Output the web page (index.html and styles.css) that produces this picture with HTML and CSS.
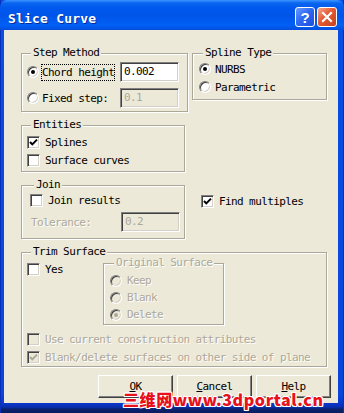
FILE: index.html
```html
<!DOCTYPE html>
<html>
<head>
<meta charset="utf-8">
<title>Slice Curve</title>
<link rel="stylesheet" href="styles.css">
</head>
<body>
<div class="window">
  <div class="titlebar">
    <span class="title">Slice Curve</span>
    <div class="tbtns">
      <span class="tbtn help">?</span>
      <span class="tbtn close"><svg width="12" height="12" viewBox="0 0 12 12"><path d="M2 2 L10 10 M10 2 L2 10" stroke="#fff" stroke-width="2.2" stroke-linecap="square"/></svg></span>
    </div>
  </div>
  <div class="client">
    <div class="row1">
      <div class="group step">
        <div class="legend">Step Method</div>
        <div class="srow first">
          <span class="opt"><span class="radio on"></span><span class="lbl focus">Chord height</span></span>
          <span class="edit">0.002</span>
        </div>
        <div class="srow gap6">
          <span class="opt"><span class="radio"></span><span class="lbl">Fixed step:</span></span>
          <span class="edit dis">0.1</span>
        </div>
      </div>
      <div class="group spline">
        <div class="legend">Spline Type</div>
        <div class="crow first1"><span class="radio on"></span><span class="lbl">NURBS</span></div>
        <div class="crow"><span class="radio"></span><span class="lbl">Parametric</span></div>
      </div>
    </div>

    <div class="group entities">
      <div class="legend">Entities</div>
      <div class="crow first2"><span class="check on"><svg width="9" height="9" viewBox="0 0 9 9"><polyline points="1,4 3.3,6.4 8,1.6" fill="none" stroke="#000" stroke-width="2"/></svg></span><span class="lbl">Splines</span></div>
      <div class="crow"><span class="check"></span><span class="lbl">Surface curves</span></div>
    </div>

    <div class="row3">
      <div class="group join">
        <div class="legend">Join</div>
        <div class="crow"><span class="check"></span><span class="lbl">Join results</span></div>
        <div class="srow gap3">
          <span class="lbl dtext tol">Tolerance:</span>
          <span class="edit dis">0.2</span>
        </div>
      </div>
      <div class="crow find"><span class="check on"><svg width="9" height="9" viewBox="0 0 9 9"><polyline points="1,4 3.3,6.4 8,1.6" fill="none" stroke="#000" stroke-width="2"/></svg></span><span class="lbl">Find multiples</span></div>
    </div>

    <div class="group trim">
      <div class="legend">Trim Surface</div>
      <div class="trimtop">
        <div class="crow yes"><span class="check"></span><span class="lbl">Yes</span></div>
        <div class="group orig">
          <div class="legend dtext">Original Surface</div>
          <div class="orow first3"><span class="radio dis"></span><span class="lbl dtext">Keep</span></div>
          <div class="orow"><span class="radio dis"></span><span class="lbl dtext">Blank</span></div>
          <div class="orow"><span class="radio dis on"></span><span class="lbl dtext">Delete</span></div>
        </div>
      </div>
      <div class="crow first4"><span class="check dis"></span><span class="lbl dtext">Use current construction attributes</span></div>
      <div class="crow"><span class="check dis on"><svg width="9" height="9" viewBox="0 0 9 9"><polyline points="1,4 3.3,6.4 8,1.6" fill="none" stroke="#aca899" stroke-width="2"/></svg></span><span class="lbl dtext">Blank/delete surfaces on other side of plane</span></div>
    </div>

    <div class="buttons">
      <span class="btn"><u>O</u>K</span>
      <span class="btn"><u>C</u>ancel</span>
      <span class="btn"><u>H</u>elp</span>
    </div>
  </div>
  <div class="watermark">三维网www.3dportal.cn</div>
</div>
</body>
</html>
```
FILE: styles.css
```css
* { box-sizing: border-box; }
html, body { margin: 0; padding: 0; }
body {
  width: 344px;
  height: 413px;
  overflow: hidden;
  background: #0a1d5e;
  font-family: "DejaVu Sans Mono", "Liberation Mono", monospace;
  font-size: 11px;
  letter-spacing: -0.6px;
  color: #000;
}
.window {
  position: relative;
  width: 344px;
  height: 413px;
  display: flex;
  flex-direction: column;
  background: linear-gradient(to bottom, #0a4ee4 0, #0846dc 395px, #0838cc 403px, #0a2fb0 407px, #0b2270 409px, #0a1d5e 413px);
  box-shadow: inset 1px 0 0 #0a2fb8, inset -1px 0 0 #0a2fb8;
}
.titlebar {
  height: 30px;
  flex: none;
  display: flex;
  align-items: flex-start;
  padding: 0 7px 0 8px;
  border-radius: 7px 7px 0 0;
  background: linear-gradient(to bottom, #3d95ff 0, #0a66f0 3px, #0058ee 8px, #0055e8 16px, #0060f6 25px, #0056e6 28px, #0a4cdc 30px);
}
.title {
  margin-top: 11px;
  font-weight: bold;
  font-size: 13px;
  letter-spacing: 0.2px;
  line-height: 16px;
  color: #fff;
  text-shadow: 1px 1px 0 #0a2a9c;
}
.tbtns {
  margin-left: auto;
  margin-top: 7px;
  display: flex;
  gap: 2px;
}
.tbtn {
  width: 20px;
  height: 20px;
  border: 1px solid #fff;
  border-radius: 3px;
  display: flex;
  align-items: center;
  justify-content: center;
}
.help {
  background: linear-gradient(135deg, #6a9cff 0, #2f6af2 45%, #1c4fdc 100%);
  color: #fff;
  font: bold 15px "Liberation Sans", sans-serif;
  letter-spacing: 0;
}
.close {
  background: linear-gradient(135deg, #f4a888 0, #e35a33 45%, #c7411a 100%);
}
.client {
  flex: none;
  margin: 0 6px 0 4px;
  height: 373px;
  background: #ece9d8;
  padding: 23px 7px 0 17px;
}
.group {
  border: 1px solid #aca899;
  box-shadow: inset 1px 1px 0 #fff, 1px 1px 0 #fff;
}
.legend {
  display: block;
  width: max-content;
  height: 12px;
  line-height: 12px;
  margin: -7px 0 0 4px;
  padding: 0 2px;
  background: #ece9d8;
}
.row1 { display: flex; align-items: flex-start; }
.step { width: 167px; padding: 0 7px 3px 5px; }
.spline { width: 135px; margin-left: 4px; padding: 0 4px 3px 6px; }
.srow { display: flex; align-items: center; height: 20px; }
.srow.first { margin-top: 3px; }
.srow.gap6 { margin-top: 6px; }
.srow.gap3 { margin-top: 3px; }
.opt { width: 93px; display: flex; align-items: center; }
.crow { display: flex; align-items: center; height: 18px; }
.crow.first1 { margin-top: 1px; }
.crow.first2 { margin-top: 2px; }
.crow.first4 { margin-top: 5px; }
.orow { display: flex; align-items: center; height: 17px; }
.orow.first3 { margin-top: 3px; }
.lbl {
  border: 1px solid transparent;
  line-height: 15px;
  white-space: nowrap;
}
.lbl.focus { border: 1px dotted #000; }
.dtext { color: #aca899; text-shadow: 1px 1px 0 #fff; }
.radio {
  position: relative;
  flex: none;
  width: 12px;
  height: 12px;
  margin-right: 2px;
  border-radius: 50%;
  background: #fff;
  border: 1px solid;
  border-color: #808080 #fff #fff #808080;
  box-shadow: inset 1px 1px 0 #404040, inset -1px -1px 0 #d4d0c8;
}
.radio.on::after {
  content: "";
  position: absolute;
  left: 3px;
  top: 3px;
  width: 4px;
  height: 4px;
  border-radius: 50%;
  background: #000;
}
.radio.dis { background: #ece9d8; }
.radio.dis.on::after { background: #aca899; }
.orig .radio { margin-right: 4px; }
.spline .radio { margin-right: 3px; }
.check {
  flex: none;
  width: 13px;
  height: 13px;
  margin-right: 4px;
  display: flex;
  align-items: center;
  justify-content: center;
  background: #fff;
  border: 1px solid;
  border-color: #808080 #fff #fff #808080;
  box-shadow: inset 1px 1px 0 #404040, inset -1px -1px 0 #d4d0c8;
}
.check svg { display: block; }
.check.dis { background: #ece9d8; }
.edit {
  flex: none;
  width: 59px;
  height: 20px;
  padding: 0 3px;
  line-height: 18px;
  background: #fff;
  border: 1px solid;
  border-color: #808080 #fff #fff #808080;
  box-shadow: inset 1px 1px 0 #404040, inset -1px -1px 0 #d4d0c8;
}
.edit.dis { background: #ece9d8; color: #aca899; }
.entities { width: 164px; margin-top: 13px; padding: 0 4px 2px 5px; }
.row3 { display: flex; align-items: flex-start; margin-top: 13px; }
.join { width: 164px; padding: 0 4px 6px 8px; }
.tol { width: 91px; }
.find { margin-left: 16px; margin-top: 7px; }
.trim { width: 306px; margin-top: 13px; padding: 0 4px 0 5px; }
.trimtop { display: flex; align-items: flex-start; }
.yes { width: 76px; margin-top: 2px; flex: none; }
.orig { width: 121px; margin-top: 5px; padding: 0 4px 1px 6px; }
.buttons {
  display: flex;
  justify-content: flex-end;
  gap: 4px;
  margin-top: 8px;
}
.btn {
  width: 75px;
  height: 23px;
  display: flex;
  align-items: center;
  justify-content: center;
  background: #ece9d8;
  border: 1px solid;
  border-color: #fff #404040 #404040 #fff;
  box-shadow: inset -1px -1px 0 #808080;
}
.watermark {
  position: absolute;
  left: 123px;
  top: 389px;
  font-family: "Noto Sans CJK SC", "Noto Sans", sans-serif;
  font-weight: 900;
  font-size: 16px;
  line-height: 20px;
  letter-spacing: 0.6px;
  color: #e8101a;
  text-shadow: 1px 0 0 #fff, -1px 0 0 #fff, 0 1px 0 #fff, 0 -1px 0 #fff, 1px 1px 0 #fff, -1px -1px 0 #fff, 1px -1px 0 #fff, -1px 1px 0 #fff;
}
```
